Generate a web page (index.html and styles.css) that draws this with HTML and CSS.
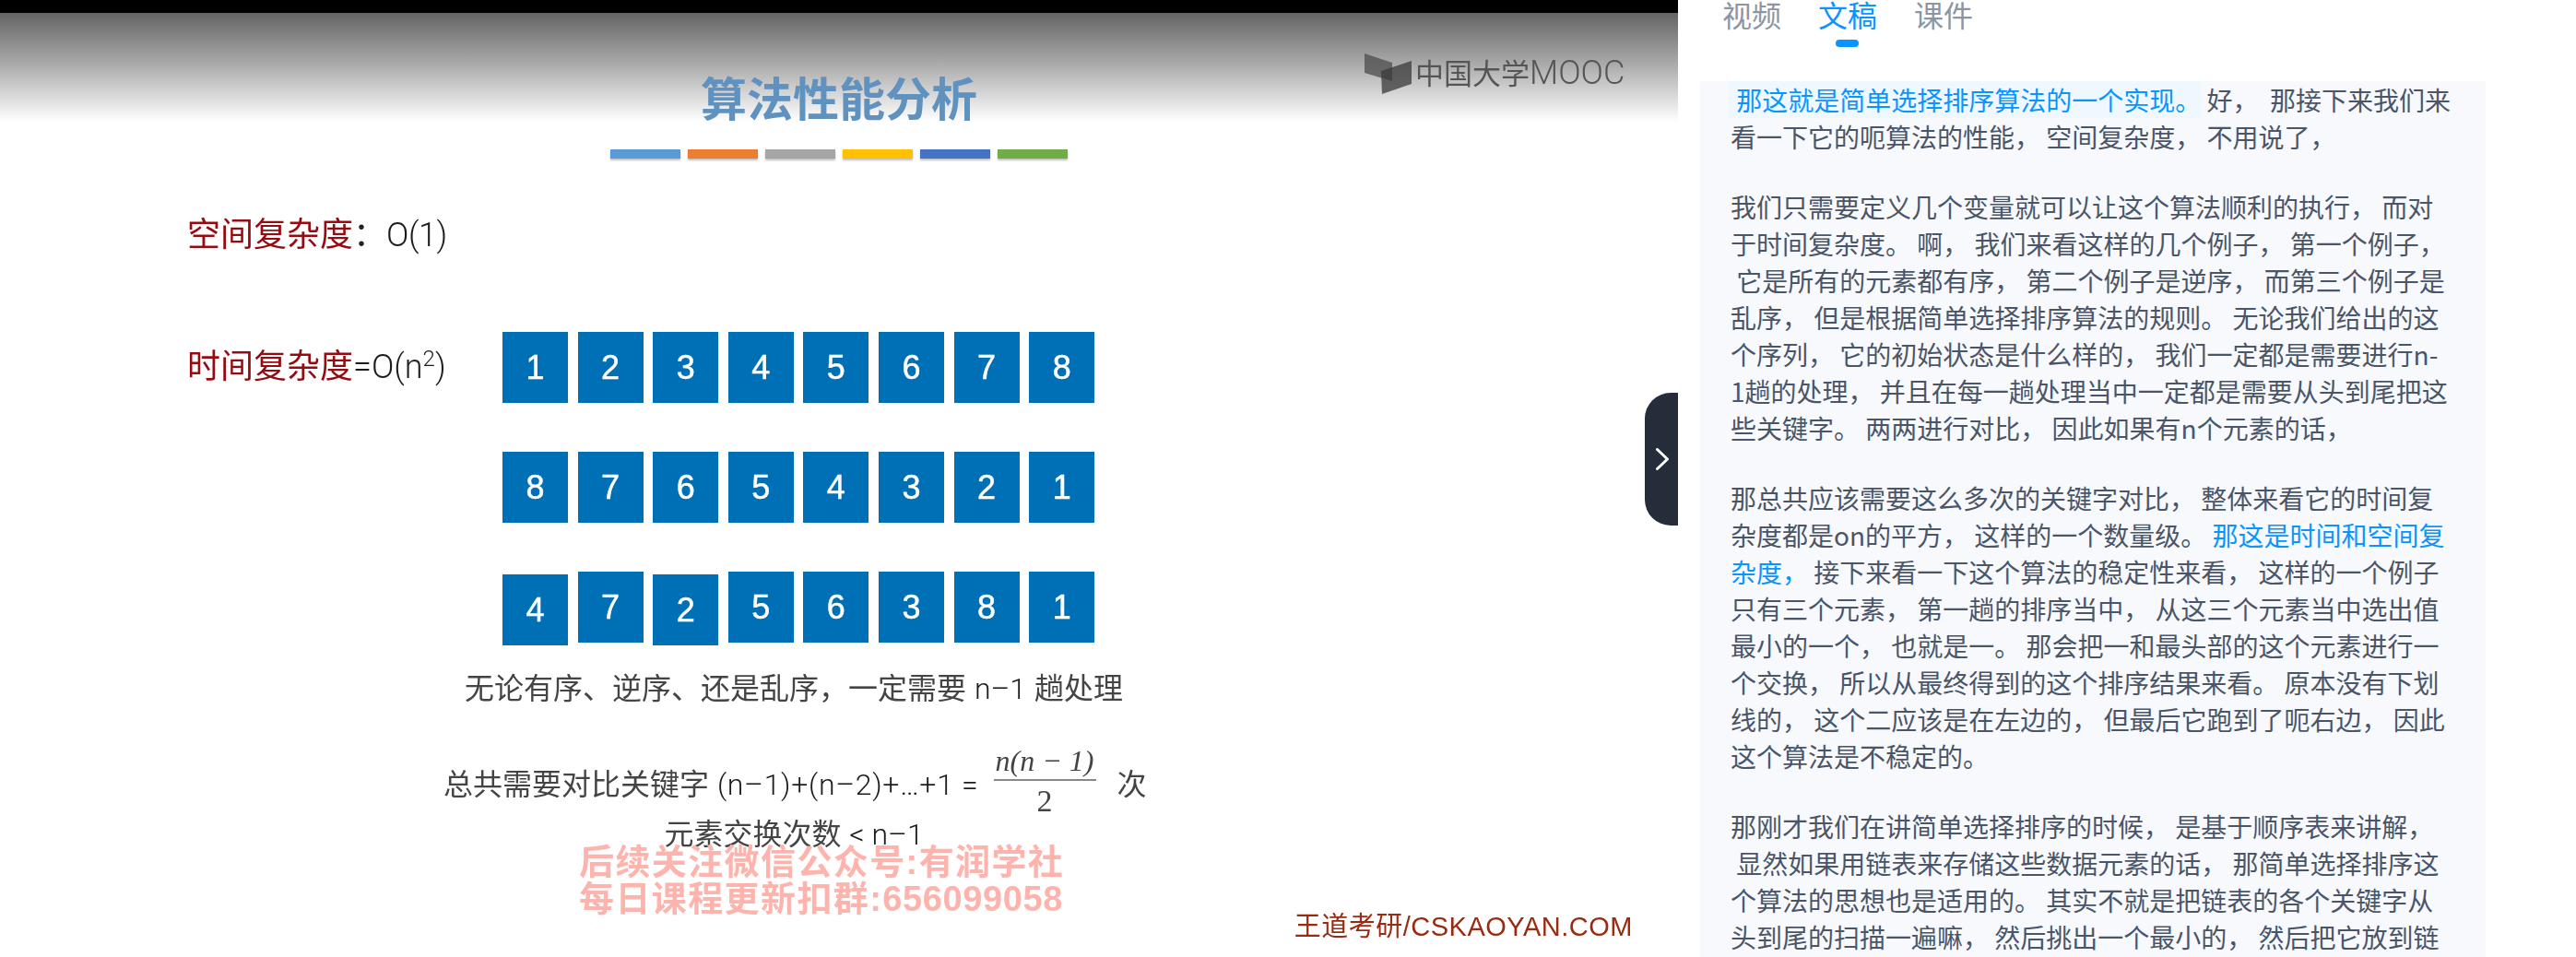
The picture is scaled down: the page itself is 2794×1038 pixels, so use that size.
FILE: index.html
```html
<!DOCTYPE html>
<html lang="zh-CN">
<head>
    <meta charset="UTF-8">
    <title>算法性能分析</title>
    <link rel="stylesheet" href="styles.css">
</head>
<body>
    <div class="page">
        <section class="video">
            <div class="slide">
                <h1 class="slide-title">算法性能分析</h1>
                <div class="bars">
                    <span class="bar bar-blue"></span>
                    <span class="bar bar-orange"></span>
                    <span class="bar bar-gray"></span>
                    <span class="bar bar-yellow"></span>
                    <span class="bar bar-indigo"></span>
                    <span class="bar bar-green"></span>
                </div>
                <p class="complexity complexity-space"><span class="red">空间复杂度</span>：<span class="light">O(1)</span></p>
                <div class="sort-area">
                    <p class="complexity complexity-time"><span class="red">时间复杂度</span><span class="light">=O(n<sup>2</sup>)</span></p>
                    <div class="rows">
                        <div class="row">
                            <div class="box">1</div><div class="box">2</div><div class="box">3</div><div class="box">4</div>
                            <div class="box">5</div><div class="box">6</div><div class="box">7</div><div class="box">8</div>
                        </div>
                        <div class="row">
                            <div class="box">8</div><div class="box">7</div><div class="box">6</div><div class="box">5</div>
                            <div class="box">4</div><div class="box">3</div><div class="box">2</div><div class="box">1</div>
                        </div>
                        <div class="row">
                            <div class="box box-low">4</div><div class="box">7</div><div class="box box-low">2</div><div class="box">5</div>
                            <div class="box">6</div><div class="box">3</div><div class="box">8</div><div class="box">1</div>
                        </div>
                    </div>
                </div>
                <p class="note note-rounds">无论有序、逆序、还是乱序，一定需要 <span class="light">n–1</span> 趟处理</p>
                <div class="formula">
                    <span>总共需要对比关键字 <span class="light sum">(n–1)+(n–2)+…+1 =</span></span>
                    <span class="fraction">
                        <span class="numerator">n(n − 1)</span>
                        <span class="denominator">2</span>
                    </span>
                    <span class="times">次</span>
                </div>
                <p class="note note-swaps">元素交换次数 <span class="light">&lt; n–1</span></p>
                <p class="site">王道考研/CSKAOYAN.COM</p>
            </div>

            <div class="logo">
                <svg class="logo-mark" viewBox="0 0 52 44" width="52" height="44">
                    <polygon points="0,0 30,10 30,30 0,21" fill="#4c4c4c" opacity="0.75"/>
                    <polygon points="18,19 51,8 51,33 19,44" fill="#3a3a3a" opacity="0.75"/>
                </svg>
                <span class="logo-text">中国大学<span class="logo-latin">MOOC</span></span>
            </div>

            <div class="watermark">
                <div>后续关注微信公众号:有润学社</div>
                <div>每日课程更新扣群:<span class="digits">656099058</span></div>
            </div>

            <button class="collapse">
                <svg viewBox="0 0 14 24" width="14" height="24">
                    <path d="M1.5 1.5 L12.5 12 L1.5 22.5" fill="none" stroke="#fff" stroke-width="3" stroke-linecap="round" stroke-linejoin="round"/>
                </svg>
            </button>
        </section>

        <aside class="side">
            <nav class="tabs">
                <a class="tab">视频</a>
                <a class="tab tab-active">文稿</a>
                <a class="tab">课件</a>
            </nav>
            <div class="transcript">
                <p>
                    <span class="line"><span class="current">&nbsp;那这就是简单选择排序算法的一个实现。</span> 好，  那接下来我们来</span>
                    <span class="line">看一下它的呃算法的性能， 空间复杂度， 不用说了，</span>
                </p>
                <p>
                    <span class="line">我们只需要定义几个变量就可以让这个算法顺利的执行， 而对</span>
                    <span class="line">于时间复杂度。 啊， 我们来看这样的几个例子， 第一个例子，</span>
                    <span class="line">&nbsp;它是所有的元素都有序， 第二个例子是逆序， 而第三个例子是</span>
                    <span class="line">乱序， 但是根据简单选择排序算法的规则。 无论我们给出的这</span>
                    <span class="line">个序列， 它的初始状态是什么样的， 我们一定都是需要进行n-</span>
                    <span class="line">1趟的处理， 并且在每一趟处理当中一定都是需要从头到尾把这</span>
                    <span class="line">些关键字。 两两进行对比， 因此如果有n个元素的话，</span>
                </p>
                <p>
                    <span class="line">那总共应该需要这么多次的关键字对比， 整体来看它的时间复</span>
                    <span class="line">杂度都是on的平方， 这样的一个数量级。 <span class="link">那这是时间和空间复</span></span>
                    <span class="line"><span class="link">杂度，</span> 接下来看一下这个算法的稳定性来看， 这样的一个例子</span>
                    <span class="line">只有三个元素， 第一趟的排序当中， 从这三个元素当中选出值</span>
                    <span class="line">最小的一个， 也就是一。 那会把一和最头部的这个元素进行一</span>
                    <span class="line">个交换， 所以从最终得到的这个排序结果来看。 原本没有下划</span>
                    <span class="line">线的， 这个二应该是在左边的， 但最后它跑到了呃右边， 因此</span>
                    <span class="line">这个算法是不稳定的。</span>
                </p>
                <p>
                    <span class="line">那刚才我们在讲简单选择排序的时候， 是基于顺序表来讲解，</span>
                    <span class="line">&nbsp;显然如果用链表来存储这些数据元素的话， 那简单选择排序这</span>
                    <span class="line">个算法的思想也是适用的。 其实不就是把链表的各个关键字从</span>
                    <span class="line">头到尾的扫描一遍嘛， 然后挑出一个最小的， 然后把它放到链</span>
                </p>
            </div>
        </aside>
    </div>
</body>
</html>
```

FILE: styles.css
```css
html, body {
    margin: 0;
    height: 100%;
    overflow: hidden;
    background: #fff;
}

p, h1 {
    margin: 0;
    font-weight: normal;
}

.page {
    display: flex;
    height: 1038px;
    font-family: "Liberation Sans", "Noto Sans CJK SC", sans-serif;
}

/* left: the video frame with the slide */
.video {
    position: relative;
    width: 1820px;
    flex: none;
    box-sizing: border-box;
    border-top: 14px solid #000;
    background: linear-gradient(#646464, #ababab 56px, #fff 118px);
}

.slide {
    display: flex;
    flex-direction: column;
    filter: blur(0.5px);
}

.slide-title {
    margin-top: 65px;
    text-align: center;
    font-size: 50px;
    line-height: 60px;
    font-weight: 700;
    color: #5f92bf;
}

.bars {
    display: flex;
    justify-content: center;
    column-gap: 8px;
    margin-top: 23px;
}

.bar {
    width: 76px;
    height: 10px;
    box-shadow: 0 2px 2px rgba(0, 0, 0, 0.25);
}

.bar-blue { background: #5b9bd5; }
.bar-orange { background: #ed7d31; }
.bar-gray { background: #a5a5a5; }
.bar-yellow { background: #ffc000; }
.bar-indigo { background: #4472c4; }
.bar-green { background: #70ad47; }

.light {
    font-family: Roboto, "Liberation Sans", sans-serif;
    font-weight: 300;
    color: #1c1c1c;
}

.sum {
    letter-spacing: 0.7px;
}

.complexity {
    font-size: 36px;
    line-height: 44px;
    color: #222;
}

.complexity-space {
    margin: 61px 0 0 203px;
}

.complexity-space .light {
    letter-spacing: -0.5px;
}

.red {
    color: #960a10;
}

.complexity sup {
    font-size: 24px;
    line-height: 0;
}

.sort-area {
    display: flex;
    align-items: flex-start;
    margin-top: 83px;
    padding-left: 203px;
}

.complexity-time {
    width: 342px;
    margin-top: 16px;
}

.rows {
    display: flex;
    flex-direction: column;
    row-gap: 53px;
}

.row {
    display: flex;
    align-items: flex-start;
    column-gap: 10.6px;
}

.box {
    width: 71px;
    height: 77px;
    background: #0070b6;
    color: #fff;
    font-size: 36px;
    line-height: 77px;
    text-align: center;
    -webkit-text-stroke: 0.5px #fff;
}

.box-low {
    margin-top: 3px;
}

.note {
    width: 1722px;
    text-align: center;
    font-size: 32px;
    line-height: 44px;
    color: #444;
}

.note-rounds {
    margin-top: 25px;
}

.formula {
    display: flex;
    align-items: center;
    column-gap: 16px;
    margin-top: 36px;
    padding-left: 481px;
    font-size: 32px;
    color: #444;
}

.times {
    margin-left: 7px;
}

.fraction {
    display: flex;
    flex-direction: column;
    align-items: center;
    width: 111px;
    font-family: "Liberation Serif", serif;
}

.numerator {
    width: 100%;
    text-align: center;
    font-size: 32px;
    line-height: 40px;
    font-style: italic;
    white-space: nowrap;
    border-bottom: 2px solid #888;
}

.denominator {
    font-size: 34px;
    line-height: 44px;
}

.note-swaps {
    margin-top: -8px;
}

.site {
    margin: 62px 49px 0 0;
    text-align: right;
    font-size: 29px;
    line-height: 32px;
    letter-spacing: 0.5px;
    color: #9a2a10;
}

/* things lying over the frame */
.logo {
    position: absolute;
    left: 1480px;
    top: 41px;
    display: flex;
    align-items: center;
    column-gap: 3px;
    filter: blur(0.6px);
}

.logo-text {
    margin-bottom: 4px;
    font-size: 31px;
    color: #555;
}

.logo-latin {
    font-family: Roboto, "Liberation Sans", sans-serif;
    font-size: 36px;
    font-weight: 300;
    line-height: 1;
}

.watermark {
    position: absolute;
    left: 628px;
    top: 901px;
    font-size: 38px;
    line-height: 40px;
    font-weight: 700;
    letter-spacing: 1.4px;
    color: #ffb3ad;
    white-space: nowrap;
    filter: blur(0.5px);
}

.digits {
    letter-spacing: 0.6px;
}

.collapse {
    position: absolute;
    right: 0;
    top: 412px;
    width: 36px;
    height: 144px;
    padding: 0 0 0 12px;
    border: none;
    border-radius: 28px 0 0 28px;
    background: #252c3a;
    display: flex;
    align-items: center;
    justify-content: flex-start;
}

/* right: tabs and transcript */
.side {
    flex: 1;
    font-family: "Noto Sans CJK SC", sans-serif;
}

.tabs {
    display: flex;
    column-gap: 40px;
    padding-left: 48px;
    height: 88px;
    box-sizing: border-box;
    font-family: "Liberation Sans", "Noto Sans CJK SC", sans-serif;
}

.tab {
    position: relative;
    font-size: 32px;
    line-height: 37px;
    color: #8d95a3;
}

.tab-active {
    color: #0a94ff;
}

.tab-active::after {
    content: "";
    position: absolute;
    left: 19px;
    top: 43px;
    width: 25px;
    height: 8px;
    border-radius: 4px;
    background: #0a94ff;
}

.transcript {
    width: 852px;
    height: 950px;
    margin-left: 24px;
    box-sizing: border-box;
    padding-left: 33px;
    background: #f7f9fd;
    overflow: hidden;
    font-size: 28px;
    line-height: 40px;
    color: #4a5568;
}

.transcript p {
    margin-bottom: 36px;
}

.line {
    display: block;
    white-space: pre;
}

.current {
    display: inline-block;
    margin-left: -2px;
    padding-left: 2px;
    background: #f0f8ff;
    color: #0a94ff;
}

.link {
    color: #0a94ff;
}
```
